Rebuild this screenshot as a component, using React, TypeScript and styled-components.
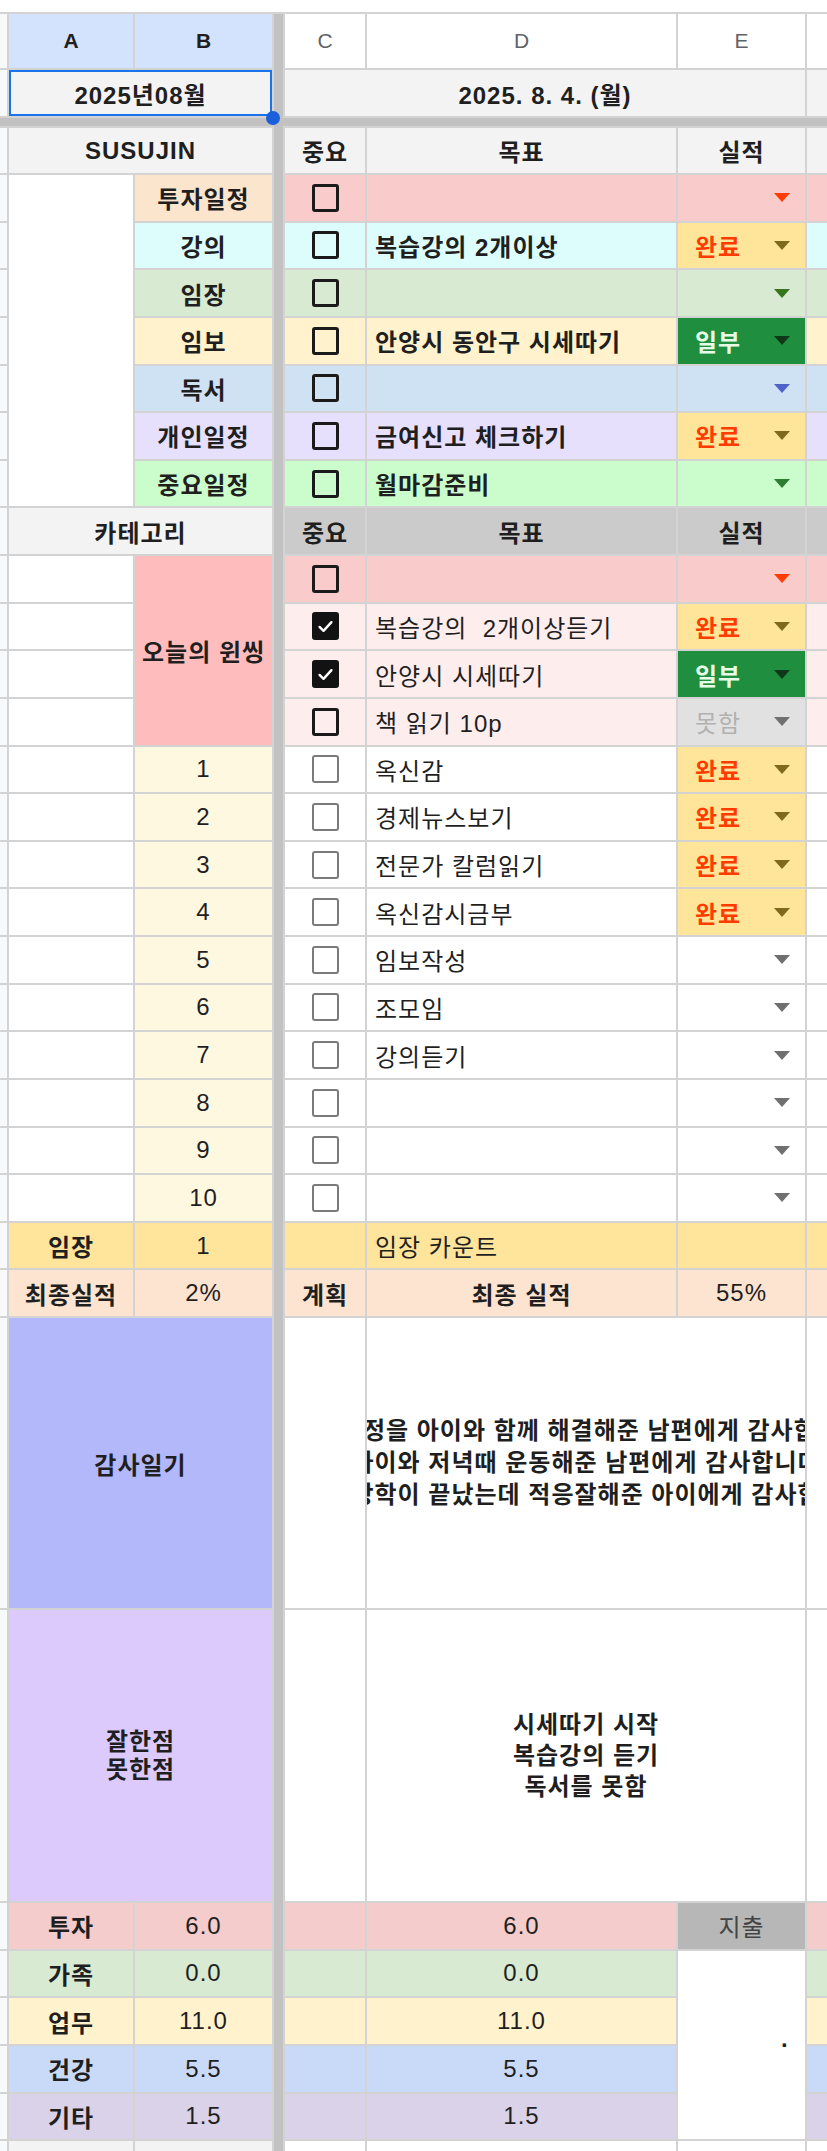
import React from "react";
import styled, { createGlobalStyle, css } from "styled-components";

const LINE = "#d3d3d3";
const FREEZE = "#c2c2c2";
const HEAD = "#f3f3f3";

const GlobalStyle = createGlobalStyle`
  html, body {
    margin: 0;
    padding: 0;
    background: #ffffff;
  }
  body {
    font-family: "Liberation Sans", "Noto Sans CJK KR", sans-serif;
  }
`;

const Page = styled.div`
  width: 827px;
  height: 2151px;
  overflow: hidden;
  padding-top: 12px;
  box-sizing: border-box;
  background: #ffffff;
`;

const Sheet = styled.div`
  display: grid;
  grid-template-columns: 7px 124px 137px 9px 80px 309px 127px 140px;
  grid-template-rows:
    54px 46px 8px 45px
    repeat(24, 45.625px)
    290px 291px
    repeat(5, 45.625px)
    40px;
  gap: 2px;
  padding-top: 2px;
  width: max-content;
  background: ${LINE};
  font-size: 24px;
  letter-spacing: 1px;
  color: #1f1f1f;
`;

type Align = "left" | "center" | "right";

interface CellProps {
  $c: string;
  $r: string | number;
  $bg?: string;
  $align?: Align;
  $bold?: boolean;
  $color?: string;
  $pad?: string;
}

const justify: Record<Align, string> = {
  left: "flex-start",
  center: "center",
  right: "flex-end",
};

const Cell = styled.div<CellProps>`
  grid-column: ${({ $c }) => $c};
  grid-row: ${({ $r }) => $r};
  display: flex;
  align-items: center;
  justify-content: ${({ $align = "center" }) => justify[$align]};
  padding: ${({ $pad = "0 8px" }) => $pad};
  min-width: 0;
  overflow: hidden;
  white-space: pre;
  background: ${({ $bg = "#ffffff" }) => $bg};
  color: ${({ $color = "#1f1f1f" }) => $color};
  font-weight: ${({ $bold }) => ($bold ? 700 : 400)};
`;

const Gutter = styled.div<{ $r: number }>`
  grid-column: 1;
  grid-row: ${({ $r }) => $r};
  background: #f8f9fa;
`;

const Freeze = styled.div<{ $c: string; $r: string }>`
  grid-column: ${({ $c }) => $c};
  grid-row: ${({ $r }) => $r};
  background: ${FREEZE};
`;

const ColHeader = styled(Cell)<{ $active?: boolean }>`
  font-family: "Liberation Sans", Arial, sans-serif;
  font-size: 21px;
  letter-spacing: 0;
  background: ${({ $active }) => ($active ? "#d3e3fd" : "#ffffff")};
  color: ${({ $active }) => ($active ? "#1f1f1f" : "#5f6368")};
  font-weight: ${({ $active }) => ($active ? 700 : 400)};
`;

const Selected = styled(Cell)`
  position: relative;
  overflow: visible;
  z-index: 2;
  box-shadow: inset 0 0 0 2px #1a73e8;

  &::after {
    content: "";
    position: absolute;
    right: -8px;
    bottom: -9px;
    width: 14px;
    height: 14px;
    border-radius: 50%;
    background: #1b5fdc;
  }
`;

const Lines = styled(Cell)<{ $lh: number }>`
  flex-direction: column;
  justify-content: center;
  align-items: center;
  padding: 0;
  line-height: ${({ $lh }) => $lh}px;
`;

type BoxKind = "dark" | "light" | "checked";

const Box = styled.span<{ $kind: BoxKind }>`
  display: grid;
  place-items: center;
  width: 27px;
  height: 28px;
  box-sizing: border-box;
  border-radius: 3px;
  ${({ $kind }) =>
    $kind === "checked"
      ? css`
          background: #121212;
          border: 3px solid #121212;
        `
      : $kind === "dark"
      ? css`
          border: 3px solid #1a1a1a;
        `
      : css`
          border: 2px solid #7b7b7b;
        `}
`;

const Arrow = styled.span<{ $color: string }>`
  margin-left: auto;
  width: 0;
  height: 0;
  border-left: 8px solid transparent;
  border-right: 8px solid transparent;
  border-top: 9px solid ${({ $color }) => $color};
`;

const STATUS = {
  done: { label: "완료", bg: "#ffe599", color: "#ff3b00", arrow: "#7f6a1c", bold: true },
  part: { label: "일부", bg: "#1f8f3f", color: "#e6fbe6", arrow: "#0f3818", bold: true },
  miss: { label: "못함", bg: "#e1e1e1", color: "#b1b1b1", arrow: "#707070", bold: false },
};

type StatusKey = keyof typeof STATUS;

const StatusCell = ({
  r,
  kind,
  bg = "#ffffff",
  arrow = "#707070",
}: {
  r: number;
  kind?: StatusKey;
  bg?: string;
  arrow?: string;
}) => {
  const s = kind ? STATUS[kind] : undefined;
  return (
    <Cell
      $c="7"
      $r={r}
      $align="left"
      $pad="0 15px 0 17px"
      $bg={s ? s.bg : bg}
      $color={s?.color}
      $bold={s?.bold}
    >
      {s?.label}
      <Arrow $color={s ? s.arrow : arrow} />
    </Cell>
  );
};

const CheckCell = ({ r, kind, bg }: { r: number; kind: BoxKind; bg?: string }) => (
  <Cell $c="5" $r={r} $bg={bg}>
    <Box $kind={kind}>
      {kind === "checked" && (
        <svg width="19" height="19" viewBox="0 0 24 24">
          <path
            d="M4.5 12.5l5 5L19.5 6.5"
            fill="none"
            stroke="#ffffff"
            strokeWidth="3"
            strokeLinecap="round"
            strokeLinejoin="round"
          />
        </svg>
      )}
    </Box>
  </Cell>
);

const SCHEDULE: {
  label: string;
  labelTone: string;
  tone: string;
  goal: string;
  status?: StatusKey;
  arrow?: string;
}[] = [
  { label: "투자일정", labelTone: "#fce5cd", tone: "#f9cbcb", goal: "", arrow: "#ff3d00" },
  { label: "강의", labelTone: "#ddfdfd", tone: "#ddfdfd", goal: "복습강의 2개이상", status: "done" },
  { label: "임장", labelTone: "#d9ead3", tone: "#d9ead3", goal: "", arrow: "#38761d" },
  { label: "임보", labelTone: "#fff2cc", tone: "#fff2cc", goal: "안양시 동안구 시세따기", status: "part" },
  { label: "독서", labelTone: "#cfe2f3", tone: "#cfe2f3", goal: "", arrow: "#4d63c9" },
  { label: "개인일정", labelTone: "#e6e0fd", tone: "#e6e0fd", goal: "금여신고 체크하기", status: "done" },
  { label: "중요일정", labelTone: "#cbfccb", tone: "#cbfccb", goal: "월마감준비", arrow: "#2e7d32" },
];

const WINNING: { box: BoxKind; goal: string; tone: string; status?: StatusKey; arrow?: string }[] = [
  { box: "dark", goal: "", tone: "#f9cbcb", arrow: "#ff3d00" },
  { box: "checked", goal: "복습강의  2개이상듣기", tone: "#fdeded", status: "done" },
  { box: "checked", goal: "안양시 시세따기", tone: "#fdeded", status: "part" },
  { box: "dark", goal: "책 읽기 10p", tone: "#fdeded", status: "miss" },
];

const TASKS: { goal: string; status?: StatusKey }[] = [
  { goal: "옥신감", status: "done" },
  { goal: "경제뉴스보기", status: "done" },
  { goal: "전문가 칼럼읽기", status: "done" },
  { goal: "옥신감시금부", status: "done" },
  { goal: "임보작성" },
  { goal: "조모임" },
  { goal: "강의듣기" },
  { goal: "" },
  { goal: "" },
  { goal: "" },
];

const HOURS = [
  { label: "투자", value: "6.0", tone: "#f4cccc" },
  { label: "가족", value: "0.0", tone: "#d9ead3" },
  { label: "업무", value: "11.0", tone: "#fff2cc" },
  { label: "건강", value: "5.5", tone: "#c9daf8" },
  { label: "기타", value: "1.5", tone: "#d9d2e9" },
];

const DIARY = [
  "큰 걱정을 아이와 함께 해결해준 남편에게 감사합니다",
  "아이와 저녁때 운동해준 남편에게 감사합니다",
  "여름방학이 끝났는데 적응잘해준 아이에게 감사합니다",
];

const REVIEW = ["시세따기 시작", "복습강의 듣기", "독서를 못함"];

const ROWS = Array.from({ length: 36 }, (_, i) => i + 1).filter((r) => r !== 3);

export default function App() {
  return (
    <>
      <GlobalStyle />
      <Page>
        <Sheet>
          {ROWS.map((r) => (
            <Gutter key={`g${r}`} $r={r} />
          ))}

          {/* column letters */}
          <ColHeader $c="2" $r={1} $active>
            A
          </ColHeader>
          <ColHeader $c="3" $r={1} $active>
            B
          </ColHeader>
          <ColHeader $c="5" $r={1}>
            C
          </ColHeader>
          <ColHeader $c="6" $r={1}>
            D
          </ColHeader>
          <ColHeader $c="7" $r={1}>
            E
          </ColHeader>
          <ColHeader $c="8" $r={1} />

          {/* month / date */}
          <Selected $c="2 / 4" $r={2} $bg={HEAD} $bold>
            2025년08월
          </Selected>
          <Cell $c="5 / 8" $r={2} $bg={HEAD} $bold>
            2025. 8. 4. (월)
          </Cell>
          <Cell $c="8" $r={2} $bg={HEAD} />

          {/* schedule block */}
          <Cell $c="2 / 4" $r={4} $bg={HEAD} $bold>
            SUSUJIN
          </Cell>
          <Cell $c="5" $r={4} $bg={HEAD} $bold>
            중요
          </Cell>
          <Cell $c="6" $r={4} $bg={HEAD} $bold>
            목표
          </Cell>
          <Cell $c="7" $r={4} $bg={HEAD} $bold>
            실적
          </Cell>
          <Cell $c="8" $r={4} $bg={HEAD} />

          <Cell $c="2" $r="5 / 12" />
          {SCHEDULE.map((row, i) => {
            const r = 5 + i;
            return (
              <React.Fragment key={row.label}>
                <Cell $c="3" $r={r} $bg={row.labelTone} $bold>
                  {row.label}
                </Cell>
                <CheckCell r={r} kind="dark" bg={row.tone} />
                <Cell $c="6" $r={r} $bg={row.tone} $align="left" $bold>
                  {row.goal}
                </Cell>
                <StatusCell r={r} kind={row.status} bg={row.tone} arrow={row.arrow} />
                <Cell $c="8" $r={r} $bg={row.tone} />
              </React.Fragment>
            );
          })}

          {/* daily winning block */}
          <Cell $c="2 / 4" $r={12} $bg={HEAD} $bold>
            카테고리
          </Cell>
          <Cell $c="5" $r={12} $bg="#cbcbcb" $bold>
            중요
          </Cell>
          <Cell $c="6" $r={12} $bg="#cbcbcb" $bold>
            목표
          </Cell>
          <Cell $c="7" $r={12} $bg="#cbcbcb" $bold>
            실적
          </Cell>
          <Cell $c="8" $r={12} $bg="#cbcbcb" />

          <Cell $c="3" $r="13 / 17" $bg="#ffbcbc" $bold>
            오늘의 윈씽
          </Cell>
          {WINNING.map((row, i) => {
            const r = 13 + i;
            return (
              <React.Fragment key={`w${r}`}>
                <Cell $c="2" $r={r} />
                <CheckCell r={r} kind={row.box} bg={row.tone} />
                <Cell $c="6" $r={r} $bg={row.tone} $align="left">
                  {row.goal}
                </Cell>
                <StatusCell r={r} kind={row.status} bg={row.tone} arrow={row.arrow} />
                <Cell $c="8" $r={r} $bg={row.tone} />
              </React.Fragment>
            );
          })}

          {TASKS.map((row, i) => {
            const r = 17 + i;
            return (
              <React.Fragment key={`t${r}`}>
                <Cell $c="2" $r={r} />
                <Cell $c="3" $r={r} $bg="#fff8e1">
                  {i + 1}
                </Cell>
                <CheckCell r={r} kind="light" />
                <Cell $c="6" $r={r} $align="left">
                  {row.goal}
                </Cell>
                <StatusCell r={r} kind={row.status} />
                <Cell $c="8" $r={r} />
              </React.Fragment>
            );
          })}

          {/* visit count / totals */}
          <Cell $c="2" $r={27} $bg="#ffe49b" $bold>
            임장
          </Cell>
          <Cell $c="3" $r={27} $bg="#ffe49b">
            1
          </Cell>
          <Cell $c="5" $r={27} $bg="#ffe49b" />
          <Cell $c="6" $r={27} $bg="#ffe49b" $align="left">
            임장 카운트
          </Cell>
          <Cell $c="7" $r={27} $bg="#ffe49b" />
          <Cell $c="8" $r={27} $bg="#ffe49b" />

          <Cell $c="2" $r={28} $bg="#fde4d0" $bold>
            최종실적
          </Cell>
          <Cell $c="3" $r={28} $bg="#fde4d0">
            2%
          </Cell>
          <Cell $c="5" $r={28} $bg="#fde4d0" $bold>
            계획
          </Cell>
          <Cell $c="6" $r={28} $bg="#fde4d0" $bold>
            최종 실적
          </Cell>
          <Cell $c="7" $r={28} $bg="#fde4d0">
            55%
          </Cell>
          <Cell $c="8" $r={28} $bg="#fde4d0" />

          {/* journal */}
          <Cell $c="2 / 4" $r={29} $bg="#b3b8fb" $bold>
            감사일기
          </Cell>
          <Cell $c="5" $r={29} />
          <Lines $c="6 / 8" $r={29} $lh={32} $bold>
            {DIARY.map((line) => (
              <span key={line}>{line}</span>
            ))}
          </Lines>
          <Cell $c="8" $r={29} />

          <Lines $c="2 / 4" $r={30} $lh={28} $bg="#dccafd" $bold>
            <span>잘한점</span>
            <span>못한점</span>
          </Lines>
          <Cell $c="5" $r={30} />
          <Lines $c="6 / 8" $r={30} $lh={31} $bold>
            {REVIEW.map((line) => (
              <span key={line}>{line}</span>
            ))}
          </Lines>
          <Cell $c="8" $r={30} />

          {/* hours */}
          {HOURS.map((row, i) => {
            const r = 31 + i;
            return (
              <React.Fragment key={row.label}>
                <Cell $c="2" $r={r} $bg={row.tone} $bold>
                  {row.label}
                </Cell>
                <Cell $c="3" $r={r} $bg={row.tone}>
                  {row.value}
                </Cell>
                <Cell $c="5" $r={r} $bg={row.tone} />
                <Cell $c="6" $r={r} $bg={row.tone}>
                  {row.value}
                </Cell>
                <Cell $c="8" $r={r} $bg={row.tone} />
              </React.Fragment>
            );
          })}
          <Cell $c="7" $r={31} $bg="#b7b7b7" $color="#444444">
            지출
          </Cell>
          <Cell $c="7" $r="32 / 36" $align="right" $pad="0 15px" $bold>
            ·
          </Cell>

          <Cell $c="2" $r={36} $bg={HEAD} />
          <Cell $c="3" $r={36} $bg={HEAD} />
          <Cell $c="5" $r={36} />
          <Cell $c="6" $r={36} />
          <Cell $c="7" $r={36} />
          <Cell $c="8" $r={36} />

          <Freeze $c="4" $r="1 / -1" />
          <Freeze $c="1 / -1" $r="3" />
        </Sheet>
      </Page>
    </>
  );
}
